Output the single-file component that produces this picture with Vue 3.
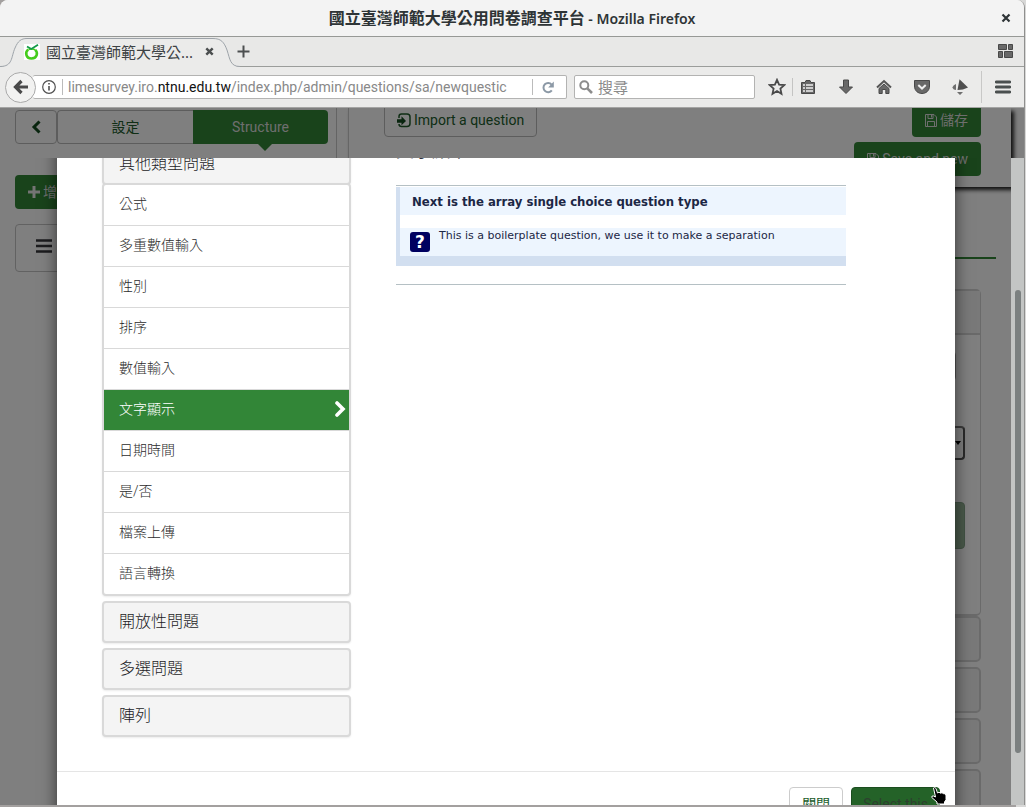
<script setup>
import { ref } from 'vue'

const types = ['公式', '多重數值輸入', '性別', '排序', '數值輸入', '文字顯示', '日期時間', '是/否', '檔案上傳', '語言轉換']
const groups = ['開放性問題', '多選問題', '陣列']
const selected = ref('文字顯示')
const search = ref('')
</script>

<template>
  <div class="desktop">
    <div class="window">
      <header class="titlebar">
        <h1><span class="site">國立臺灣師範大學公用問卷調查平台</span> - Mozilla Firefox</h1>
        <button class="win-close" aria-label="Close window">
          <svg width="10" height="10" viewBox="0 0 10 10"><path d="M1.5 1.5l7 7M8.5 1.5l-7 7" stroke="#2e3436" stroke-width="2.2" /></svg>
        </button>
      </header>

      <div class="tabs">
        <div class="tab">
          <svg class="tab-shape" width="240" height="30" viewBox="0 0 240 30">
            <path d="M0 29.5C13 29.5 11 20 15 11C18 4 21 1.5 27 1.5H213C221 1.5 224 5 227 13C230 22 230 29.5 240 29.5V30H0Z" fill="#ebebea" />
            <path d="M0 29.5C13 29.5 11 20 15 11C18 4 21 1.5 27 1.5H213C221 1.5 224 5 227 13C230 22 230 29.5 240 29.5" fill="none" stroke="#9da3a9" />
          </svg>
          <svg class="favicon" width="16" height="16" viewBox="0 0 16 16">
            <rect width="16" height="16" fill="#fff" />
            <path d="M4.2 5.5C1 8 1.5 14.3 7.5 14.5C13.5 14.3 14 8.5 11.3 5.8" fill="none" stroke="#45cc1c" stroke-width="2.6" />
            <path d="M4.5 5.5C6 4.8 9.5 4.8 11.3 6" fill="none" stroke="#45cc1c" stroke-width="1.6" />
            <path d="M3 2.5L7.3 5L14 .8" fill="none" stroke="#139a48" stroke-width="1.8" />
          </svg>
          <span class="tab-title">國立臺灣師範大學公...</span>
          <button class="tab-close" aria-label="Close tab">
            <svg width="9" height="9" viewBox="0 0 9 9"><path d="M1.3 1.3l6.4 6.4M7.7 1.3l-6.4 6.4" stroke="#4c4f50" stroke-width="2.4" /></svg>
          </button>
        </div>
        <button class="new-tab" aria-label="New tab">
          <svg width="13" height="13" viewBox="0 0 13 13"><path d="M6.5 .5v12M.5 6.5h12" stroke="#4c4f50" stroke-width="2" /></svg>
        </button>
        <button class="tab-groups" aria-label="Tab groups">
          <svg width="15" height="15" viewBox="0 0 15 15" fill="#686868" stroke="#484848"><path d="M.5 .5h8v5h-8zM10.5 .5h4v5h-4zM.5 7.5h4v6h-4zM6.5 7.5h8v6h-8z" /></svg>
        </button>
      </div>

      <nav class="toolbar">
        <button class="back" aria-label="Back">
          <svg width="16" height="16" viewBox="0 0 16 16"><path d="M8.5 2L2.5 8l6 6M3 8h12" fill="none" stroke="#4a4a4a" stroke-width="3.2" /></svg>
        </button>
        <div class="urlbar">
          <svg class="info" width="14" height="14" viewBox="0 0 14 14"><circle cx="7" cy="7" r="6.3" fill="none" stroke="#505050" stroke-width="1.2" /><path d="M7 6v4.500M7 3v1.600" stroke="#505050" stroke-width="1.6" /></svg>
          <i class="url-sep"></i>
          <div class="url" role="textbox" aria-label="Address" contenteditable="true">limesurvey.iro.<b>ntnu.edu.tw</b>/index.php/admin/questions/sa/newquestic</div>
          <i class="url-sep"></i>
          <button class="reload" aria-label="Reload">
            <svg width="13" height="13" viewBox="0 0 13 13"><path d="M9.8 9.3A4.6 4.6 0 1 1 9.6 3.6" fill="none" stroke="#8c99a6" stroke-width="2" /><path d="M11.8 .6v5.900H6.200z" fill="#8c99a6" /></svg>
          </button>
        </div>
        <label class="search">
          <svg width="14" height="14" viewBox="0 0 14 14"><circle cx="5.3" cy="5.3" r="4" fill="none" stroke="#8c8c8c" stroke-width="2" /><path d="M8.3 8.3l4.7 4.7" stroke="#8c8c8c" stroke-width="2.6" /></svg>
          <input v-model="search" type="text" placeholder="搜尋" aria-label="搜尋" />
        </label>
        <div class="tools">
          <button class="tool" aria-label="Bookmark"><svg width="18" height="18" viewBox="0 0 18 18"><path d="M9 1.800l2.100 4.800 5.200.5-3.900 3.500 1.100 5.200L9 13.100l-4.500 2.700 1.100-5.200L1.700 7.100l5.200-.5z" fill="none" stroke="#4a4a4a" stroke-width="1.8" /></svg></button>
          <i class="tool-sep"></i>
          <button class="tool" aria-label="Library"><svg width="16" height="16" viewBox="0 0 16 16"><path d="M1.500 3.500h3.500l1-2h4l1 2h3.500v11h-13z" fill="#686868" stroke="#484848" /><path d="M3 6h2M6 6h7M3 9h2M6 9h7M3 12h2M6 12h7" stroke="#eee" stroke-width="1.6" /></svg></button>
          <button class="tool" aria-label="Downloads"><svg width="16" height="16" viewBox="0 0 16 16"><path d="M5.500 1h5v7h4L8 14.500 1.500 8h4z" fill="#686868" stroke="#484848" /></svg></button>
          <button class="tool" aria-label="Home"><svg width="16" height="16" viewBox="0 0 16 16"><path d="M1 8.500L8 2l7 6.500" fill="none" stroke="#555" stroke-width="2" /><path d="M3 9.500l5-4.500 5 4.500v5H9.800v-4H6.200v4H3z" fill="#686868" stroke="#484848" /></svg></button>
          <button class="tool" aria-label="Pocket"><svg width="16" height="16" viewBox="0 0 16 16"><path d="M.5 1.500h15v5.500c0 10-15 10-15 0z" fill="#686868" stroke="#484848" /><path d="M4.300 6L8 9.500 11.700 6" fill="none" stroke="#eee" stroke-width="2" /></svg></button>
          <button class="tool" aria-label="Add-on"><svg width="16" height="16" viewBox="0 0 16 16"><path d="M7.500 .2L16 8.500Q11 11 5.500 11z" fill="#4f4f4f" /><path d="M.3 8.500Q1.500 5.500 4 5v6Q1.500 11 .3 8.500zM5 13h6l-3 3z" fill="#6f6f6f" /></svg></button>
          <i class="menu-sep"></i>
          <button class="tool" aria-label="Menu"><svg width="16" height="14" viewBox="0 0 16 14"><path d="M1.200 2h13.600M1.200 7h13.600M1.200 12h13.600" stroke="#4a4f4f" stroke-width="2.8" stroke-linecap="round" /></svg></button>
        </div>
      </nav>

      <main class="page">
        <div class="backdrop-page">
          <aside class="sidebar">
            <div class="side-tabs">
              <button class="btn collapse" aria-label="Collapse"><svg width="10" height="14" viewBox="0 0 10 14"><path d="M8.500 1.500L3 7l5.500 5.500" fill="none" stroke="#134a1e" stroke-width="3" /></svg></button>
              <button class="btn settings">設定</button>
              <button class="structure">Structure</button>
            </div>
            <button class="green add"><svg width="12" height="12" viewBox="0 0 12 12"><path d="M6 0v12M0 6h12" stroke="#e8e8e8" stroke-width="3" /></svg>增</button>
            <div class="side-menu"><svg width="16" height="14" viewBox="0 0 16 14"><path d="M0 1.500h16M0 7h16M0 12.500h16" stroke="#38383c" stroke-width="2.6" /></svg></div>
          </aside>
          <section class="content">
            <div class="actions">
              <button class="btn import"><svg width="14" height="15" viewBox="0 0 14 15"><path d="M2 5V3.500Q2 1 4.500 1H10Q13 1 13 4V10.500Q13 13.500 10 13.500H4.500Q2 13.500 2 11" fill="none" stroke="#205c2b" stroke-width="1.5" /><path d="M0 6.300h4.500V3.300L9 8l-4.500 4.300V9.800H0z" fill="#134a1e" /></svg>Import a question</button>
              <div class="saves">
                <button class="green"><svg width="12" height="13" viewBox="0 0 12 13" fill="none" stroke="#ddd"><path d="M.5 .5h8.500l2.500 2.500v9.500H.5zM3 .5v4h5v-4M2.500 12.500v-5h7v5M6.500 1v2.500" /></svg>儲存</button>
                <button class="green"><svg width="12" height="13" viewBox="0 0 12 13" fill="none" stroke="#ddd"><path d="M.5 .5h8.500l2.500 2.500v9.500H.5zM3 .5v4h5v-4M2.500 12.500v-5h7v5M6.500 1v2.500" /></svg>Save and new</button>
              </div>
            </div>
            <div class="rule"></div>
            <div class="panels">
              <div class="panel open">
                <div class="panel-head"></div>
                <div class="panel-body">
                  <div class="field"></div>
                  <div class="combo"><svg width="6" height="4" viewBox="0 0 6 4"><path d="M0 0h6L3 4z" /></svg></div>
                  <div class="switch"></div>
                </div>
              </div>
              <div v-for="n in 4" :key="n" class="panel closed"></div>
            </div>
          </section>
          <div class="shade"></div>
        </div>

        <div class="modal-scroll">
          <div class="dialog" role="dialog" aria-modal="true">
            <div class="dialog-body">
              <div class="type-list">
                <button class="group">其他類型問題</button>
                <ul class="types">
                  <li v-for="t in types" :key="t">
                    <a href="#" :class="{ active: t === selected }" @click.prevent="selected = t">{{ t }}
                      <svg v-if="t === selected" width="11" height="17" viewBox="0 0 11 17"><path d="M2 2l6 6L2 14" fill="none" stroke="#fff" stroke-width="3.6" stroke-linecap="round" stroke-linejoin="miter" /></svg>
                    </a>
                  </li>
                </ul>
                <button v-for="g in groups" :key="g" class="group">{{ g }}</button>
              </div>
              <div class="preview">
                <h3>{{ selected }}</h3>
                <div class="sample">
                  <div class="sample-inner">
                    <p class="sample-title">Next is the array single choice question type</p>
                    <div class="sample-help">
                      <span class="help-icon">?</span>
                      <p>This is a boilerplate question, we use it to make a separation</p>
                    </div>
                    <div class="sample-foot"></div>
                  </div>
                </div>
              </div>
            </div>
            <footer class="dialog-foot">
              <button class="close-btn">關閉</button>
              <button class="select-btn">Select this</button>
            </footer>
          </div>
          <div class="track"><div class="thumb"></div></div>
        </div>
        <svg class="pointer" width="16" height="19" viewBox="0 0 16 19"><path d="M2.500 2Q3.500 .5 5 2.500L6.500 7l1.500-.8 1.500 1 1.500-.5 1.500 1 1.500 0 1 2v4L13.500 16v2H6v-2L.8 11.500q-.3-2 1.700-1.500L4.500 11z" fill="#000" stroke="#fff" /></svg>
      </main>
    </div>
  </div>
</template>

<style>
body { margin: 0; overflow: hidden; }
</style>

<style scoped>
* { box-sizing: border-box; }
button { font: inherit; color: inherit; background: none; border: 0; padding: 0; margin: 0; display: flex; align-items: center; justify-content: center; white-space: nowrap; }
h1, h3, p, ul { margin: 0; padding: 0; list-style: none; }
svg { flex: none; display: block; }

.desktop { height: 100vh; padding: 0 1px 2px 0; background: linear-gradient(90deg, #a3a09f 99%, #d8d8d7 99%); font-family: "Noto Sans", "Noto Sans CJK TC", sans-serif; }
.window { height: 100%; display: flex; flex-direction: column; border-right: 1px solid #8f8f8e; border-radius: 8px 8px 0 0; overflow: hidden; background: #ebebea; }

.titlebar { flex: none; height: 37px; display: flex; align-items: center; justify-content: center; position: relative; background: #f3f3f3; border-bottom: 1px solid #979996; }
.titlebar h1 { font-size: 14px; line-height: 20px; font-weight: 600; color: #2e3436; }
.site { font-size: 16px; }
.win-close { position: absolute; right: 13px; top: 13px; }

.tabs { flex: none; height: 30px; display: flex; align-items: center; background: #e8e8e7; border-bottom: 1px solid #9b9d9b; }
.tab { width: 235px; height: 30px; display: flex; align-items: center; position: relative; padding-left: 24px; }
.tab-shape { position: absolute; left: 0; top: 0; z-index: 0; }
.favicon, .tab-title, .tab-close { position: relative; }
.tab-title { font-size: 15px; line-height: 20px; color: #3d4244; margin-left: 6px; width: 150px; white-space: nowrap; }
.tab-close { margin-left: 9px; }
.new-tab { position: relative; margin-left: 2px; }
.tab-groups { margin-left: auto; margin-right: 11px; }

.toolbar { flex: none; height: 41px; display: flex; align-items: center; border-bottom: 1px solid #a5a5a4; padding-left: 5px; background: #ebebea; }
.back { width: 31px; height: 31px; border: 1px solid #aaa; border-radius: 50%; background: #f2f2f1; position: relative; z-index: 1; }
.urlbar { flex: 539; min-width: 0; height: 24px; margin-left: -3px; background: #fff; border: 1px solid #b3b3b2; border-left: 0; border-radius: 2px; display: flex; align-items: center; padding-left: 9px; }
.url-sep { width: 1px; height: 16px; background: #bbb; flex: none; margin: 0 5px 0 6px; }
.url { flex: 1; min-width: 0; overflow: hidden; white-space: nowrap; font-family: Roboto, "Noto Sans", sans-serif; font-size: 14px; line-height: 20px; color: #888; outline: 0; margin-right: 18px; }
.url b { font-weight: 400; color: #111; }
.reload { margin: 0 11px 0 4px; }
.search { flex: 176; min-width: 0; height: 24px; margin-left: 7px; background: #fff; border: 1px solid #b3b3b2; border-radius: 2px; display: flex; align-items: center; gap: 5px; padding: 0 4px; }
.search input { flex: 1; min-width: 0; border: 0; outline: 0; padding: 0; background: none; font: 15px/20px "Noto Sans", "Noto Sans CJK TC", sans-serif; }
.search input::placeholder { color: #8a8a8a; opacity: 1; }
.tools { flex: none; display: flex; align-items: center; margin-left: 11px; padding-right: 5px; }
.tool { width: 22px; height: 22px; margin-right: 16px; }
.tool:last-child { margin-right: 5px; width: 22px; }
.tool:first-child { margin-right: 4px; }
.tool-sep { width: 1px; height: 18px; background: #c4c4c3; margin-right: 4px; }
.menu-sep { width: 1px; height: 32px; background: #c8c8c7; margin: 0 10px 0 -6px; }

.page { flex: 1; min-height: 0; position: relative; overflow: hidden; font-family: Roboto, "Noto Sans CJK TC", sans-serif; font-size: 14px; line-height: 20px; }
.backdrop-page { height: 100%; display: flex; background: #fff; position: relative; }
.shade { position: absolute; inset: 0; background: rgba(0, 0, 0, 0.5); }
.btn { height: 34px; border: 1px solid #bbb; border-radius: 4px; color: #205c2b; background: #fff; }
.green, .structure { background: #328637; color: #ddd; }
.green { height: 34px; border-radius: 4px; padding: 0 13px; gap: 3px; }
.sidebar { flex: none; width: 337px; border-right: 1px solid #c8c8c8; padding: 2px 8px 0 15px; }
.side-tabs { display: flex; }
.collapse { width: 42px; }
.settings { flex: 1; border-radius: 4px 0 0 4px; border-right: 0; }
.structure { flex: 1; height: 34px; border-radius: 0 4px 4px 0; position: relative; }
.structure::after { content: ""; position: absolute; left: 53%; bottom: -7px; margin-left: -7px; border: 7px solid transparent; border-bottom: 0; border-top-color: #328637; }
.add { margin-top: 31px; width: 140px; justify-content: flex-start; }
.side-menu { margin-top: 15px; height: 48px; border: 1px solid #c4c4c4; border-radius: 4px; padding: 14px 20px; }
.content { flex: 1; min-width: 0; padding-right: 13px; margin-left: 11px; }
.actions { height: 79px; display: flex; justify-content: space-between; align-items: flex-start; padding: 0 30px 0 35px; border-left: 1px solid #ccc; box-shadow: 3px 3px 4px #222; background: #fff; }
.import { height: 34px; margin-top: -5px; padding: 0 12px; gap: 3px; }
.saves { display: flex; flex-direction: column; align-items: flex-end; gap: 5px; margin-top: -5px; }
.rule { height: 2px; background: #328637; margin: 70px 15px 0 0; }
.panels { margin-right: 30px; padding-top: 30px; display: flex; flex-direction: column; gap: 5px; }
.panel { border: 2px solid #d4d4d4; border-radius: 5px; }
.panel.open { height: 327px; border-right-width: 1px; margin-bottom: -5px; }
.panel-head { height: 44px; background: #f2f2f2; border-bottom: 2px solid #d4d4d4; }
.panel-body { display: flex; flex-direction: column; padding-right: 15px; }
.field { height: 30px; margin: 16px 9px 0 0; border: 1px solid #aaa; border-radius: 4px; }
.combo { height: 34px; margin-top: 45px; border: 2px solid #777; border-right-color: #555; border-bottom-color: #555; border-radius: 4px; display: flex; align-items: center; justify-content: flex-end; padding-right: 2px; }
.switch { height: 47px; margin-top: 42px; border: 1px solid #84a488; background: #94b496; border-radius: 4px; }
.panel.closed { height: 46px; background: #f2f2f2; }

.modal-scroll { position: absolute; inset: 50px 0 0 0; display: flex; overflow: hidden; }
.dialog { flex: 1; min-width: 0; margin: -30px 56px 0 57px; padding-top: 15px; background: #fff; box-shadow: 0 5px 15px rgba(0, 0, 0, 0.6); align-self: flex-start; }
.dialog-body { display: flex; padding: 0 109px 34px 45px; }
.type-list { flex: none; width: 249px; display: flex; flex-direction: column; gap: 5px; }
.group { height: 42px; border: 2px solid #d9d9d9; border-radius: 4px; background: #f4f4f4; justify-content: flex-start; padding: 0 15px; font-size: 16px; line-height: 24px; font-weight: 300; color: #1c1c26; box-shadow: 0 1px 2px rgba(0, 0, 0, 0.08); }
.types { margin-top: -7px; position: relative; background: #fff; border: 2px solid #d9d9d9; border-radius: 4px; box-shadow: 0 1px 2px rgba(0, 0, 0, 0.08); }
.types a { height: 40px; display: flex; align-items: center; justify-content: space-between; padding: 0 3px 2px 15px; font-weight: 300; color: #2c2c2c; text-decoration: none; }
.types li + li { border-top: 1px solid #d9d9d9; }
.types a.active { background: #328637; color: #fff; }
.preview { flex: 1; min-width: 0; margin-left: 45px; }
.preview h3 { font-size: 18px; line-height: 24px; font-weight: 400; color: #35353f; height: 46px; margin-top: -4px; }
.sample { border-top: 1px solid #b5c0c4; border-bottom: 1px solid #b5c0c4; padding: 1px 0 18px; }
.sample-inner { border-left: 4px solid #d2dff0; font-family: "DejaVu Sans", sans-serif; color: #1c2745; }
.sample-title { background: #edf5fe; height: 28px; padding-left: 12px; margin-bottom: 13px; font-family: "DejaVu Sans Condensed", "DejaVu Sans", sans-serif; font-size: 13px; line-height: 30px; font-weight: 700; }
.sample-help { background: #edf5fe; height: 28px; display: flex; padding-left: 10px; font-size: 11px; line-height: 16px; }
.help-icon { width: 20px; height: 20px; margin: 4px 9px 0 0; background: #000060; color: #fff; border-radius: 3px; font-size: 17px; font-weight: 700; line-height: 20px; text-align: center; }
.sample-foot { height: 10px; background: #d2dff0; }
.dialog-foot { border-top: 1px solid #e5e5e5; display: flex; justify-content: flex-end; gap: 8px; padding: 15px; }
.close-btn { height: 34px; padding: 0 12px; border: 1px solid #ccc; border-radius: 4px; color: #205c2b; }
.select-btn { height: 34px; padding: 0 11px; border: 1px solid #1b4d1f; border-radius: 4px; background: #246228; color: #2e3f30; }
.track { flex: none; width: 13px; background: #c3c5c4; padding: 132px 3px 0 4px; }
.thumb { height: 463px; background: #7b8080; border-radius: 3px; }
.pointer { position: absolute; right: 77px; bottom: 0; }
</style>
